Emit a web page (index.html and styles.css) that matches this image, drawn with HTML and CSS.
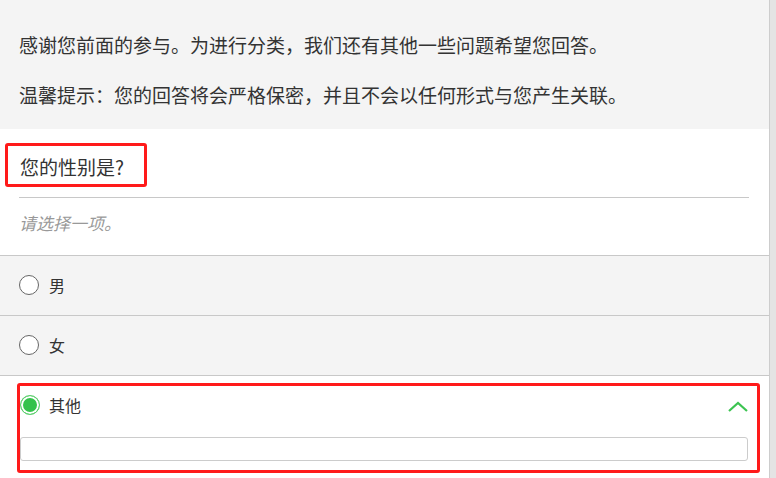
FILE: index.html
```html
<!DOCTYPE html>
<html lang="zh-CN">
<head>
  <meta charset="UTF-8" />
  <meta name="viewport" content="width=device-width, initial-scale=1.0"/>
  <title>问卷</title>
  <link rel="stylesheet" href="styles.css">
</head>
<body>
  <div class="page">
    <div class="survey">
      <!-- Intro -->
      <div class="intro">
        <p>感谢您前面的参与。为进行分类，我们还有其他一些问题希望您回答。</p>
        <p>温馨提示：您的回答将会严格保密，并且不会以任何形式与您产生关联。</p>
      </div>

      <!-- Question -->
      <div class="question">
        <div class="q-title">
          <span class="q-text">您的性别是?</span>
        </div>
        <div class="q-hint">请选择一项。</div>
      </div>

      <!-- Options -->
      <ul class="options">
        <li class="option">
          <span class="radio"></span>
          <span class="label">男</span>
        </li>
        <li class="option">
          <span class="radio"></span>
          <span class="label">女</span>
        </li>
        <li class="option selected">
          <div class="other-block">
            <div class="other-row">
              <span class="radio checked"></span>
              <span class="label">其他</span>
              <svg class="chevron" width="20" height="11" viewBox="0 0 20 11">
                <polyline points="1,10 10,2 19,10" fill="none" stroke="#3cc451" stroke-width="2.2"/>
              </svg>
            </div>
            <input class="other-input" type="text" />
          </div>
        </li>
      </ul>
    </div>
    <div class="gutter"></div>
  </div>
</body>
</html>
```

FILE: styles.css
```css
* {
  margin: 0;
  padding: 0;
  box-sizing: border-box;
  font-family: "Noto Sans CJK SC", "Microsoft YaHei", sans-serif;
}

body {
  background-color: #FFFFFF;
  color: #333333;
  overflow: hidden;
}

.page {
  display: flex;
  min-height: 100vh;
}

.survey {
  width: 770px;
  border-right: 1px solid #cdcdcd;
  flex-shrink: 0;
}

.gutter {
  flex: 1;
  background-color: #e4e4e4;
}

/* Intro block */
.intro {
  background-color: #f4f4f4;
  padding: 30px 19px 19px;
  display: flex;
  flex-direction: column;
  gap: 20px;
}

.intro p {
  font-size: 19px;
  line-height: 30px;
  white-space: nowrap;
}

/* Question */
.question {
  background-color: #FFFFFF;
}

.q-title {
  margin: 0 20px 0 5px;
  padding: 14px 0 11px;
  position: relative;
}

.q-title::after {
  content: "";
  position: absolute;
  left: 14px;
  right: 0;
  bottom: 0;
  border-bottom: 1px solid #c8c8c8;
}

.q-text {
  display: inline-block;
  font-size: 19px;
  line-height: 26px;
  padding: 8px 20px 4px 12px;
  border: 3px solid #ff1a1a;
  border-radius: 3px;
}

.q-hint {
  padding: 13px 19px 20px;
  font-size: 17px;
  line-height: 24px;
  font-style: italic;
  color: #999999;
}

/* Options */
.options {
  list-style: none;
}

.option {
  display: flex;
  align-items: center;
  gap: 10px;
  height: 60px;
  padding: 0 19px 2px;
  border-top: 1px solid #c8c8c8;
  background-color: #f4f4f4;
}

.option.selected {
  display: block;
  height: auto;
  padding: 7px 9px 20px 17px;
  background-color: #FFFFFF;
}

.radio {
  width: 20px;
  height: 20px;
  border: 1.5px solid #666666;
  border-radius: 50%;
  background-color: #FFFFFF;
  flex-shrink: 0;
}

.radio.checked {
  border-color: #5fd06f;
  background-color: #34c24b;
  box-shadow: inset 0 0 0 2px #FFFFFF;
}

.label {
  font-size: 16px;
  line-height: 24px;
}

.other-block {
  border: 3px solid #ff1a1a;
  border-radius: 3px;
  padding: 0 9px 9px 0;
}

.other-row {
  display: flex;
  align-items: center;
  gap: 9px;
  height: 38px;
}

.chevron {
  margin-left: auto;
  margin-top: 2px;
}

.other-input {
  display: block;
  width: 100%;
  height: 24px;
  margin-top: 13px;
  border: 1px solid #cccccc;
  border-radius: 3px;
  background: #FFFFFF;
}
```
